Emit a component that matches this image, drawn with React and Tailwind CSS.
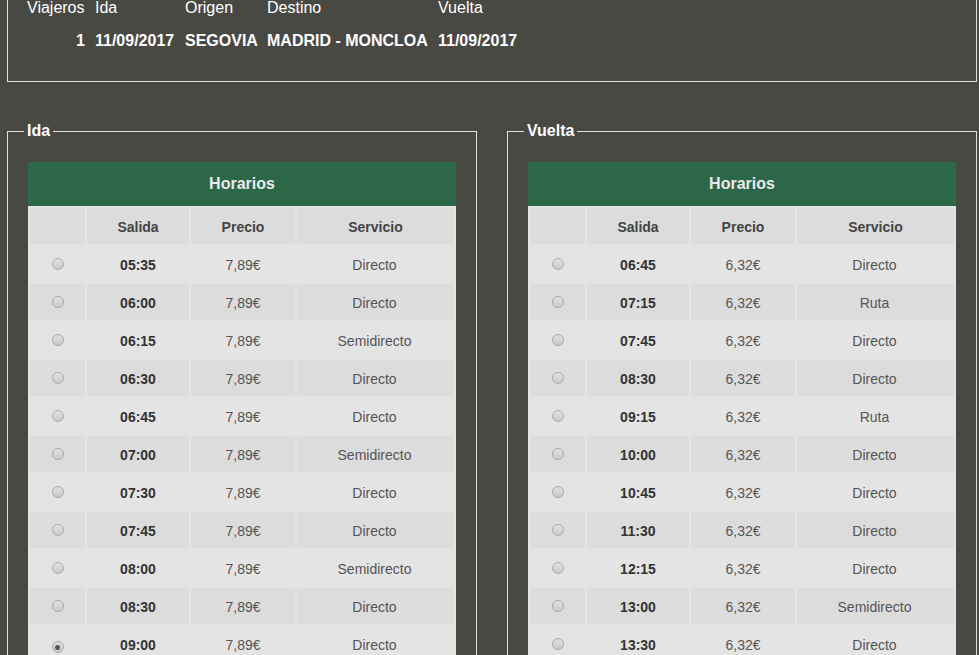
const ida = [
  ["05:35", "7,89€", "Directo"],
  ["06:00", "7,89€", "Directo"],
  ["06:15", "7,89€", "Semidirecto"],
  ["06:30", "7,89€", "Directo"],
  ["06:45", "7,89€", "Directo"],
  ["07:00", "7,89€", "Semidirecto"],
  ["07:30", "7,89€", "Directo"],
  ["07:45", "7,89€", "Directo"],
  ["08:00", "7,89€", "Semidirecto"],
  ["08:30", "7,89€", "Directo"],
  ["09:00", "7,89€", "Directo"],
];

const vuelta = [
  ["06:45", "6,32€", "Directo"],
  ["07:15", "6,32€", "Ruta"],
  ["07:45", "6,32€", "Directo"],
  ["08:30", "6,32€", "Directo"],
  ["09:15", "6,32€", "Ruta"],
  ["10:00", "6,32€", "Directo"],
  ["10:45", "6,32€", "Directo"],
  ["11:30", "6,32€", "Directo"],
  ["12:15", "6,32€", "Directo"],
  ["13:00", "6,32€", "Semidirecto"],
  ["13:30", "6,32€", "Directo"],
];

const Radio = ({ checked }) => (
  <span className="inline-flex w-[12px] h-[12px] rounded-full border border-[#a9a9a9] bg-gradient-to-b from-[#e2e2e2] to-[#c9c9c9] items-center justify-center mt-[-4px]">
    {checked && <span className="w-[5px] h-[5px] rounded-full bg-[#555]"></span>}
  </span>
);

const Horarios = ({ rows, checkedIndex }) => (
  <div className="ml-1 w-[428px] mt-[21px]">
    <div className="h-[44px] bg-[#2c6748] text-[#eaeaea] font-bold text-[16px] flex items-center justify-center">
      Horarios
    </div>
    <table className="w-full bg-[#e4e4e4] border-separate border-spacing-[2px] text-[14px] text-[#555]">
      <thead>
        <tr className="h-[36px]">
          <th className="w-[55px] bg-[#dcdcdc]"></th>
          <th className="w-[102px] pt-[2px] bg-[#dcdcdc] font-bold text-[#444]">Salida</th>
          <th className="w-[104px] pt-[2px] bg-[#dcdcdc] font-bold text-[#444]">Precio</th>
          <th className="pt-[2px] bg-[#dcdcdc] font-bold text-[#444]">Servicio</th>
        </tr>
      </thead>
      <tbody>
        {rows.map((r, i) => {
          const bg = i % 2 === 1 ? "bg-[#dcdcdc]" : "bg-[#e4e4e4]";
          return (
            <tr key={r[0]} className="h-[36px]">
              <td className={`${bg} text-center pt-[2px]`}>
                <Radio checked={i === checkedIndex} />
              </td>
              <td className={`${bg} text-center pt-[2px] font-bold text-[#333]`}>{r[0]}</td>
              <td className={`${bg} text-center pt-[2px]`}>{r[1]}</td>
              <td className={`${bg} text-center pt-[2px] pr-[2px]`}>{r[2]}</td>
            </tr>
          );
        })}
      </tbody>
    </table>
  </div>
);

const App = () => {
  return (
    <div className="h-[655px] overflow-hidden bg-[#494943] font-['Liberation_Sans',Arial,sans-serif] text-white">
      {/* Resumen del viaje */}
      <div className="ml-[7px] w-[970px] border-x border-b border-[#e0e0e0] pl-[19px] pb-[31px]">
        <div className="grid grid-cols-[58px_80px_72px_161px_80px] gap-x-[10px] gap-y-[15px] text-[16px] leading-[18px] mt-[-1px]">
          <div>Viajeros</div>
          <div>Ida</div>
          <div>Origen</div>
          <div>Destino</div>
          <div>Vuelta</div>
          <div className="font-bold text-right">1</div>
          <div className="font-bold whitespace-nowrap">11/09/2017</div>
          <div className="font-bold whitespace-nowrap">SEGOVIA</div>
          <div className="font-bold whitespace-nowrap">MADRID - MONCLOA</div>
          <div className="font-bold whitespace-nowrap">11/09/2017</div>
        </div>
      </div>

      <div className="flex gap-[30px] ml-[7px] mt-[39px]">
        <fieldset className="w-[470px] border border-[#e0e0e0] px-4 pb-4">
          <legend className="px-[3px] font-bold text-[16px] leading-[20px]">Ida</legend>
          <Horarios rows={ida} checkedIndex={10} />
        </fieldset>
        <fieldset className="w-[470px] border border-[#e0e0e0] px-4 pb-4">
          <legend className="px-[3px] font-bold text-[16px] leading-[20px]">Vuelta</legend>
          <Horarios rows={vuelta} checkedIndex={-1} />
        </fieldset>
      </div>
    </div>
  );
};

export default App
